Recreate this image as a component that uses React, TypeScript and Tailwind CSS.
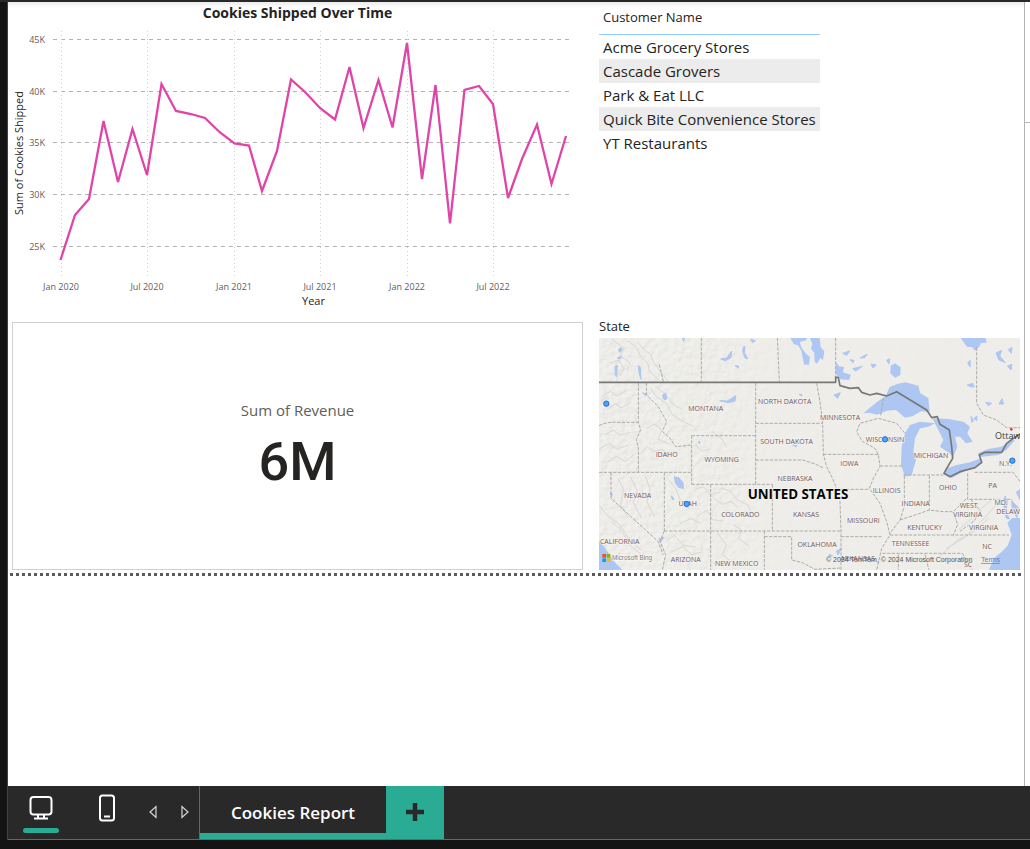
import React from "react";

const FONT = "'Open Sans', 'Noto Sans', sans-serif";

const seriesPoints =
  "60.5,260 75,215 89,199 103.5,121 118,182 132.5,129 147,175 161.5,84 176,111 191,114 205,118 220,132.5 234.5,143.5 249,145.5 262,191 277,151 291,79.5 305,92 320.5,108.5 335,119.5 349.5,67 363.5,128 378.5,80 392.5,127.5 407,43 422,179 435.5,85 450,223.5 464.5,90 479,86 493,104 508,198 522,159 537,124.5 551.5,184 566,136";

const yTicks = [
  { label: "45K", y: 39 },
  { label: "40K", y: 91 },
  { label: "35K", y: 142 },
  { label: "30K", y: 194 },
  { label: "25K", y: 246 },
];

const xTicks = [
  { label: "Jan 2020", x: 61 },
  { label: "Jul 2020", x: 147 },
  { label: "Jan 2021", x: 234 },
  { label: "Jul 2021", x: 320 },
  { label: "Jan 2022", x: 407 },
  { label: "Jul 2022", x: 493 },
];

function CookiesChart() {
  return (
    <svg viewBox="12 4 571 306" className="block w-full" role="img" aria-label="Cookies Shipped Over Time" fontFamily={FONT}>
      <text x="297.5" y="18" textAnchor="middle" fontSize="14" fontWeight="700" fill="#252423">
        Cookies Shipped Over Time
      </text>
      {yTicks.map((t) => (
        <g key={t.label}>
          <line x1="53" x2="573" y1={t.y + 0.5} y2={t.y + 0.5} stroke="#b3b3b3" strokeDasharray="4 4" />
          <text x="45" y={t.y + 4} textAnchor="end" fontSize="9" fill="#605e5c">{t.label}</text>
        </g>
      ))}
      {xTicks.map((t) => (
        <g key={t.label}>
          <line x1={t.x + 0.5} x2={t.x + 0.5} y1="31" y2="279" stroke="#d0d0d0" strokeDasharray="1 3" />
          <text x={t.x} y="290" textAnchor="middle" fontSize="9" fill="#605e5c">{t.label}</text>
        </g>
      ))}
      <polyline points={seriesPoints} fill="none" stroke="#e044a7" strokeWidth="2.3" strokeLinejoin="miter" />
      <text x="313.5" y="305" textAnchor="middle" fontSize="11" fill="#252423">Year</text>
      <text transform="translate(23 153) rotate(-90)" textAnchor="middle" fontSize="11" fill="#252423">
        Sum of Cookies Shipped
      </text>
    </svg>
  );
}

const customers = ["Acme Grocery Stores", "Cascade Grovers", "Park & Eat LLC", "Quick Bite Convenience Stores", "YT Restaurants"];

function CustomerTable() {
  return (
    <table className="border-separate border-spacing-0 text-left text-[#252423]">
      <thead>
        <tr>
          <th className="border-b border-solid border-b-[#90ccff] px-1 pb-[7px] text-[13px] leading-5 font-normal">Customer Name</th>
        </tr>
      </thead>
      <tbody>
        {customers.map((name) => (
          <tr key={name} className="even:bg-[#ececec]">
            <td className="px-1 text-[15px] leading-6 whitespace-nowrap">{name}</td>
          </tr>
        ))}
      </tbody>
    </table>
  );
}

const stateLabels: [string, number, number][] = [
  ["MONTANA", 320, 218],
  ["NORTH DAKOTA", 557, 199],
  ["SOUTH DAKOTA", 563, 318],
  ["MINNESOTA", 723, 247],
  ["WISCONSIN", 858, 313],
  ["MICHIGAN", 996, 361],
  ["IDAHO", 203, 356],
  ["WYOMING", 368, 371],
  ["NEBRASKA", 588, 428],
  ["IOWA", 751, 385],
  ["NEVADA", 116, 480],
  ["UTAH", 266, 504],
  ["COLORADO", 424, 537],
  ["KANSAS", 621, 537],
  ["ILLINOIS", 863, 466],
  ["OHIO", 1047, 457],
  ["INDIANA", 950, 504],
  ["MISSOURI", 793, 556],
  ["KENTUCKY", 977, 575],
  ["WEST", 1109, 511],
  ["VIRGINIA", 1106, 536],
  ["VIRGINIA", 1154, 575],
  ["TENNESSEE", 935, 624],
  ["CALIFORNIA", 62, 619],
  ["ARIZONA", 260, 671],
  ["NEW MEXICO", 413, 685],
  ["OKLAHOMA", 654, 628],
  ["ARKANSAS", 776, 670],
  ["N.Y.", 1219, 385],
  ["PA", 1181, 451],
  ["MD.", 1206, 500],
  ["NC", 1164, 633],
  ["SC", 1107, 687],
];

const stateBorders = [
  "M181 80L193 131M307 0V131M535 0L541 131M710 0V115",
  "M0 263Q25 250 60 253H118M118 135V253L125 275L112 305L118 330V402",
  "M142 135V170L178 206L203 251L190 280L213 301L230 326L278 321",
  "M0 403H278M278 293V439M278 293H470M278 439H520M196 403V579M335 439V696M196 579H726",
  "M520 439V579M470 135V439M470 256H671M470 366H612L648 378L674 390",
  "M653 136L663 191L671 256L673 349L683 386L698 416L713 451L723 491L726 579V696",
  "M673 349H838L843 386L823 421L811 451L843 496L863 551L873 591L848 631L833 696M713 454H808M843 384H913",
  "M838 349L828 331L790 310L773 281L783 256L838 241L893 256L918 286M845 232L854 176",
  "M916 414V505L903 546L873 586M903 546L963 526L990 516L1033 521L1063 521L1103 481",
  "M913 411H1033M991 413V516M1106 406V484H1240M1127 403H1242L1263 430M873 591H1230M850 646H1090M726 596H850",
  "M496 579V696M496 596H578V666L610 674L648 694L726 690M36 403V481L178 611L193 651",
  "M196 579L183 610L200 650L190 696M1063 521L1076 560L1063 591M1115 484L1145 520L1124 550L1083 580",
  "M898 650V696M978 650L990 696M1090 646L1120 696M1133 29V196L1153 231L1193 246L1223 269H1263",
];

const mountainLines = [
  "M40 5L75 30L64 53L94 76L84 97M85 8L113 29L124 54L147 77L150 98L182 128",
  "M116 12L133 33L154 48L164 74L184 99L207 130M32 75L60 66L75 93L64 114",
  "M9 175L34 160L54 174L80 159M22 215L50 197L67 210L96 192M17 290L42 276L63 292L93 283",
  "M154 151L174 177L204 198L219 229L250 249L285 266M170 145L198 168L224 200L248 214",
  "M142 272L166 258L188 275L177 304L210 318M122 350L145 326L164 341L190 334L209 350",
  "M0 333L32 316L53 334L88 321M28 371L53 355L79 371L105 350M288 320L310 340L333 333",
  "M340 281L370 304L383 329M347 354L371 370L390 359M0 502L25 532L65 563L94 611L127 636",
  "M58 424L74 455L65 500L87 540M94 416L115 459L103 493L127 539M140 415L153 456L144 491L166 536",
  "M208 424L231 453L244 487L272 513M292 452L315 447L334 471L364 462M344 481L371 499L396 490L419 510",
  "M366 451L395 459L415 486L446 500L458 524M294 535L325 516L340 545L372 549M243 557L276 541L304 556",
  "M36 551L64 573L95 624L134 655M202 609L226 592L253 622L290 627M215 643L250 626L279 650L308 642",
  "M354 584L382 620L371 650L401 675M402 560L429 577L419 601L450 624M1023 655L1074 607L1100 595L1145 552L1192 500",
  "M1080 574L1115 545L1144 513L1177 487M1041 633L1089 603L1140 570L1170 538",
];

const lakes = [
  "M793 226L833 193L860 174L872 147L895 138L920 133L958 143L964 166L988 180L992 222L966 220L940 235L918 239L891 216L863 218L835 230L810 224Z",
  "M933 261L963 251L1008 256L988 266L963 271L948 301L943 341L951 366L938 411L918 416L906 381L908 326L918 286Z",
  "M1000 241L1048 243L1093 251L1113 266L1105 286L1121 311L1101 316L1083 296L1068 296L1075 326L1063 356L1051 346L1023 326L1033 306L1018 276Z",
  "M1045 391L1073 381L1113 373L1145 361L1151 376L1103 396L1058 420L1033 409Z",
  "M1138 345L1168 333L1208 326L1240 302L1246 308L1222 336L1198 351L1148 356L1138 351Z",
  "M0 606L22 635L45 670L70 696H0Z",
  "M1263 540H1240L1225 554L1238 590L1226 623L1208 641L1185 661L1170 696H1263Z",
  "M1085 0L1104 26L1120 28L1128 38L1140 27L1146 15L1163 14L1160 0Z",
  "M574 0L584 18L597 22L607 38L612 65L616 80L630 80L633 57L621 47L608 30L602 12L618 8L626 0Z",
  "M633 0L640 18L636 32L646 44L647 72L654 77L664 60L672 66L676 40L665 28L662 0Z",
  "M224 415L240 418L254 435L255 453L239 450L228 436Z",
  "M875 83L888 76L905 88L904 111L888 119L874 106Z",
  "M711 73L720 84L735 88L732 103L756 111L750 126L724 124L710 106Z",
];

const smallWater = [
  "M58 34l9 -5l2 8l-7 6zM48 85l7 -3l-2 35l-4 -4zM118 83l6 5l2 36l-6 -19zM55 60l12 -6l-4 9zM250 0l7 0l-3 10z",
  "M365 63l18 -3l15 -21l-2 20l-17 9zM433 27l5 -2l-2 19l10 18l-8 -2l-7 -21zM455 4l14 4l-8 6z",
  "M408 83l11 1l-1 7zM362 188l23 1l26 -16l-3 16l-20 5zM190 172l10 -7l3 18l-7 3zM131 165l13 3l-4 5z",
  "M761 92l29 -7l-20 14zM731 46l21 -7l-9 13zM783 60l22 -12l-8 11zM753 65l12 2l-3 7zM816 78l16 3l-10 9z",
  "M705 171l19 -7l-8 17zM863 67l9 -5l-2 16zM1106 76l7 -9l1 20zM1105 141l16 -5l5 11l-12 -1z",
  "M1191 45l17 -8l-6 17l17 20l-19 -8zM1225 84l14 -5l-3 17zM1228 35l11 -7l-2 18zM1200 198l9 -16l5 16zM1160 193l18 3l-10 7z",
  "M1125 241l9 -7l-1 14zM1116 235l8 13l-6 5zM600 169l10 2l-3 3zM581 322l13 -2l-2 6zM297 312l6 -2l-1 7z",
  "M34 465l7 3l-4 8zM217 474l8 8l-4 4zM180 602l15 -4l-10 14zM712 640l16 -10l-11 21zM690 649l11 4l-8 3z",
  "M1218 474l7 19l-4 27l10 23l-9 -2l-8 -25zM1238 488l20 21l-4 30l-14 -21zM1252 462l11 -7v31z",
];

const nationalBorder =
  "M0 133H710V117L718 119L723 143L753 151L778 149L788 163L813 171L833 166L863 174L893 161L983 216L998 239L1015 236L1023 259L1051 276L1058 326L1061 361L1043 391L1035 406L1053 416L1083 401L1128 389L1148 373L1141 351L1158 343H1208L1223 316L1243 301L1263 288";

const pins: [number, number][] = [[22, 197], [858, 304], [263, 498], [1240, 368]];

function StateMap() {
  return (
    <svg viewBox="0 0 1263 696" className="block w-full bg-[#efeeea]" role="img" aria-label="Map of customer states" fontFamily={FONT}>
      <defs>
        <filter id="relief" x="0" y="0" width="100%" height="100%">
          <feTurbulence type="fractalNoise" baseFrequency="0.055" numOctaves="3" seed="8" />
          <feDiffuseLighting surfaceScale="3" lightingColor="#f7f6f2">
            <feDistantLight azimuth="225" elevation="65" />
          </feDiffuseLighting>
        </filter>
        <linearGradient id="fade">
          <stop offset="0" stopColor="#fff" />
          <stop offset="0.28" stopColor="#ddd" />
          <stop offset="0.42" stopColor="#333" />
          <stop offset="1" stopColor="#111" />
        </linearGradient>
        <mask id="west">
          <rect width="1263" height="696" fill="url(#fade)" />
        </mask>
      </defs>
      <rect width="1263" height="696" fill="#efeeea" />
      <g mask="url(#west)">
        <rect width="1263" height="696" filter="url(#relief)" opacity="0.5" />
      </g>
      <path d={mountainLines.join("")} fill="none" stroke="#d8d7d3" strokeWidth="3" strokeLinejoin="round" />
      <g fill="#adc7f2">
        {lakes.map((d) => <path key={d} d={d} />)}
        <path d={smallWater.join("")} stroke="#adc7f2" strokeWidth="3" />
      </g>
      <path d={stateBorders.join("")} fill="none" stroke="#aeaca9" strokeWidth="3" strokeDasharray="10 4" />
      <path d={nationalBorder} fill="none" stroke="#777875" strokeWidth="5" strokeLinejoin="round" />
      <g fontSize="21" fill="#6e5858" textAnchor="middle" stroke="#f5f3f0" strokeWidth="4" paintOrder="stroke">
        {stateLabels.map(([name, x, y]) => <text key={`${name}-${x}`} x={x} y={y}>{name}</text>)}
        <text x="1192" y="527" textAnchor="start">DELAW</text>
      </g>
      <text x="597" y="484" textAnchor="middle" fontSize="40" fontWeight="700" fill="#050505" stroke="#f5f3f0" strokeWidth="4" paintOrder="stroke">
        UNITED STATES
      </text>
      <text x="1188" y="304" fontSize="27" fill="#3b3b3b">Ottaw</text>
      <circle cx="1237" cy="274" r="4" fill="#e33" />
      {pins.map(([x, y]) => <circle key={x} cx={x} cy={y} r="8" fill="#4aa3ff" stroke="#2370d0" strokeWidth="3" />)}
      <g>
        <path d="M10 648h11v11h-11z" fill="#f25022" />
        <path d="M23 648h11v11h-11z" fill="#7fba00" />
        <path d="M10 661h11v11h-11z" fill="#00a4ef" />
        <path d="M23 661h11v11h-11z" fill="#ffb900" />
      </g>
      <text x="39" y="667" fontSize="19" fill="#777" stroke="#fff" strokeWidth="3" paintOrder="stroke" fontFamily="'Liberation Sans', sans-serif">Microsoft Bing</text>
      <g fontSize="21" fontFamily="'Liberation Sans', sans-serif">
        <text x="681" y="672" fill="#555">© 2024 TomTom, © 2024 Microsoft Corporation</text>
        <a href="#terms"><text x="1146" y="672" fill="#6780b5" textDecoration="underline">Terms</text></a>
      </g>
    </svg>
  );
}

function DesktopIcon() {
  return (
    <svg viewBox="0 0 24 24" className="size-6" fill="none" stroke="#fff" strokeWidth="2" aria-hidden="true">
      <rect x="1.5" y="1" width="21" height="17.5" rx="3" />
      <path d="M9 19v3M15 19v3M5 22.5h14" />
    </svg>
  );
}

function PhoneIcon() {
  return (
    <svg viewBox="0 0 18 28" className="h-7 w-[18px]" fill="none" stroke="#fff" strokeWidth="2" aria-hidden="true">
      <rect x="2" y="1.5" width="14" height="25" rx="2.5" />
      <path d="M6 22.5h6" />
    </svg>
  );
}

function PageBar() {
  return (
    <nav className="flex h-[54px] shrink-0 border-b border-[#666] bg-[#292929]" aria-label="Report pages">
      <div className="flex w-48 shrink-0 border-r border-[#666]">
        <button aria-label="Desktop layout" className="ml-[15px] flex w-9 flex-col items-center gap-2 pt-[10px]">
          <DesktopIcon />
          <span className="h-[5px] w-9 rounded-full bg-[#2aab94]" />
        </button>
        <button aria-label="Mobile layout" className="ml-8 flex w-8 justify-center pt-2">
          <PhoneIcon />
        </button>
        <button aria-label="Previous page" className="ml-[22px] flex w-4 items-center justify-center pb-0.5">
          <svg viewBox="0 0 8 14" className="h-3.5 w-2" fill="none" stroke="#d8d8d8" strokeWidth="1.2" aria-hidden="true"><path d="M7 1.5v11L1 7z" /></svg>
        </button>
        <button aria-label="Next page" className="ml-4 flex w-4 items-center justify-center pb-0.5">
          <svg viewBox="0 0 8 14" className="h-3.5 w-2" fill="none" stroke="#d8d8d8" strokeWidth="1.2" aria-hidden="true"><path d="M1 1.5v11l6-5.500z" /></svg>
        </button>
      </div>
      <button className="w-[186px] border-b-[6px] border-[#2aab94] pt-1.5 text-[17px] font-semibold text-white">Cookies Report</button>
      <button aria-label="Add page" className="flex w-[58px] items-center justify-center bg-[#2aab94] pb-0.5">
        <svg viewBox="0 0 18 18" className="size-[18px]" stroke="#292929" strokeWidth="4.500" aria-hidden="true"><path d="M9 0v18M0 9h18" /></svg>
      </button>
    </nav>
  );
}

export default function App() {
  return (
    <div className="flex min-h-screen flex-col border-t-2 border-[#292929] bg-[#141414] pb-[9px] font-['Open_Sans','Noto_Sans',sans-serif]">
      <div className="ml-[7px] flex flex-1 flex-col border-l border-[#444]">
        <div className="flex flex-1 bg-white">
          <main className="min-w-0 flex-1 bg-linear-to-b from-[#ececec] to-white to-[6px]">
            <div className="grid grid-cols-[571fr_421fr] gap-x-4 pr-1 pl-1">
              <section className="pt-0.5"><CookiesChart /></section>
              <section className="pt-[5px]"><CustomerTable /></section>
              <section className="mt-3 flex flex-col items-center justify-center border border-[#cfcfcf] text-[#252423]">
                <p className="pt-1 text-[15px] leading-6 text-[#605e5c]">Sum of Revenue</p>
                <p className="pt-1 font-['Roboto',sans-serif] text-[54px] leading-[72px] font-medium">6M</p>
              </section>
              <section className="mt-2">
                <h2 className="h-5 text-[13px] leading-4 text-[#252423]">State</h2>
                <StateMap />
              </section>
            </div>
            <div className="mt-[3px] ml-0.5 h-[3px] bg-[repeating-linear-gradient(90deg,#5a5a5a_0_3px,transparent_3px_6px)]" />
          </main>
          <aside className="w-1.5 shrink-0 border-l border-[#b3b3b3]" aria-label="Panes">
            <div className="h-[121px] border-b border-[#b3b3b3]" />
          </aside>
        </div>
        <PageBar />
      </div>
    </div>
  );
}
